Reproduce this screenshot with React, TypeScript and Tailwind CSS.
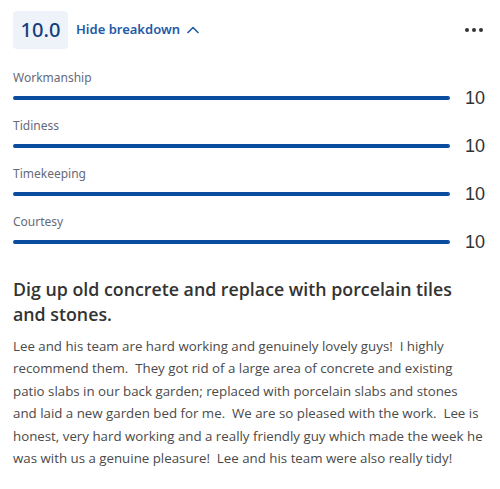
import React from "react";

const rows = ["Workmanship", "Tidiness", "Timekeeping", "Courtesy"];

export default function App() {
  return (
    <div className="w-[500px] h-[489px] bg-white px-[13px] pt-[11px]" style={{ fontFamily: '"Open Sans", sans-serif' }}>
      <div className="flex items-center justify-between">
        <div className="flex items-center">
          <div className="w-[55px] h-[38px] rounded-[4px] bg-[#eef3fa] flex items-center justify-center text-[20px] font-medium text-[#123f7c]" style={{ fontFamily: '"Noto Sans", sans-serif' }}>
            10.0
          </div>
          <button className="ml-[8px] flex items-center text-[13px] font-semibold text-[#1f5aa6]" style={{ fontFamily: '"Noto Sans", sans-serif' }}>
            Hide breakdown
            <svg className="ml-[7px]" width="12" height="8" viewBox="0 0 12 8" fill="none">
              <path d="M1 6.5L6 1.5L11 6.5" stroke="#1f5aa6" strokeWidth="1.6" strokeLinecap="round" strokeLinejoin="round" />
            </svg>
          </button>
        </div>
        <div className="flex items-center gap-[3px] mr-[4px]">
          <span className="w-[4px] h-[4px] rounded-full bg-[#333]" />
          <span className="w-[4px] h-[4px] rounded-full bg-[#333]" />
          <span className="w-[4px] h-[4px] rounded-full bg-[#333]" />
        </div>
      </div>

      <div className="mt-[21px] flex flex-col gap-[8px]">
        {rows.map((r) => (
          <div key={r}>
            <div className="text-[12px] leading-[16px] text-[#666a78]" style={{ fontFamily: '"Noto Sans", sans-serif' }}>{r}</div>
            <div className="flex items-center h-[24px]">
              <div className="flex-1 h-[3.5px] rounded-full bg-[#0a4da0]" />
              <div className="ml-[15px] w-[22px] text-[18px] leading-[24px] text-[#333]" style={{ fontFamily: '"Liberation Sans", sans-serif' }}>10</div>
            </div>
          </div>
        ))}
      </div>

      <h2 className="mt-[23px] text-[17.8px] leading-[25px] font-semibold text-[#333]">
        Dig up old concrete and replace with porcelain tiles and stones.
      </h2>
      <p className="mt-[8px] pr-[3.5px] text-[13.3px] leading-[22.4px] text-[#4a4a4a]">
        Lee and his team are hard working and genuinely lovely guys!&nbsp; I highly recommend them.&nbsp; They got rid of a large area of concrete and existing patio slabs in our back garden; replaced with porcelain slabs and stones and laid a new garden bed for me.&nbsp; We are so pleased with the work.&nbsp; Lee is honest, very hard working and a really friendly guy which made the week he was with us a genuine pleasure!&nbsp; Lee and his team were also really tidy!
      </p>
    </div>
  );
}
